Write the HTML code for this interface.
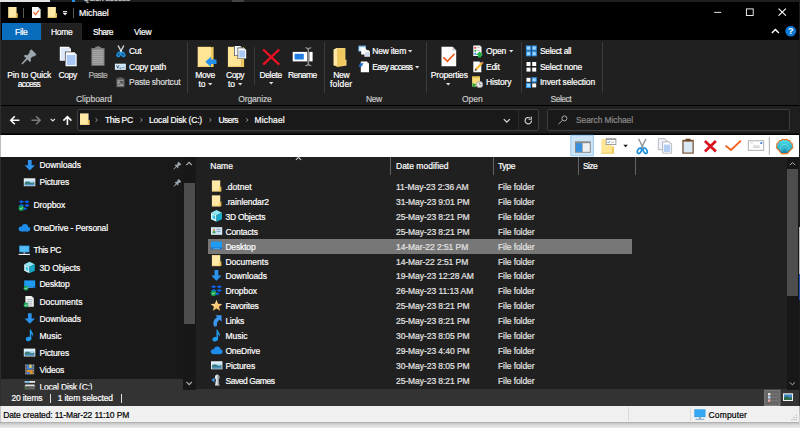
<!DOCTYPE html>
<html>
<head>
<meta charset="utf-8">
<title>Michael</title>
<style>
*{box-sizing:border-box;margin:0;padding:0}
html,body{width:800px;height:428px;overflow:hidden;background:#000}
body{position:relative;font-family:"Liberation Sans",sans-serif;font-size:8.6px;color:#fff;line-height:11px}
.a{position:absolute}
.t{position:absolute;white-space:nowrap;color:#fff;-webkit-text-stroke:0.2px currentColor}
.c{text-align:center}
.g{color:#b4b4b4}
svg{position:absolute;overflow:visible}
/* regions */
#topsliver{left:0;top:0;width:800px;height:2px;background:#1e1e1e}
#title{left:0;top:2px;width:800px;height:38px;background:#000}
#ribbon{left:0;top:40px;width:800px;height:64.7px;background:#202020}
#addr{left:0;top:106px;width:800px;height:28px;background:#1f1f1f;border-bottom:1px solid #0e0e0e}
#tool{left:0;top:135px;width:798.5px;height:21.6px;background:#fff}
#nav{left:0;top:157px;width:196px;height:233px;background:#191919}
#list{left:196px;top:157px;width:604px;height:233px;background:#202020}
#status{left:0;top:389.4px;width:800px;height:16.6px;background:#333}
#bottom{left:0;top:406px;width:798.5px;height:15.6px;background:#f0f0f0}
#under{left:0;top:421.6px;width:800px;height:6.4px;background:linear-gradient(#a8a8a8,#c8c8c8 25%,#dcdcdc 55%,#e9e9e9)}
.sep{position:absolute;width:1px;background:#3d3d3d}
.row{position:absolute;left:0;height:15px;width:100%}
</style>
</head>
<body>
<div class="a" id="topsliver"></div>
<div class="a" style="left:0;top:0;width:49.5px;height:1.7px;background:#e2e2e2"></div>
<div class="a" style="left:72px;top:0;width:3px;height:1.7px;background:#2a8fe8"></div>
<div class="a" style="left:232px;top:0;width:12px;height:1.7px;background:#444"></div>
<div class="a" id="title"></div>
<div class="a" id="ribbon"></div>
<div class="a" id="addr"></div>
<div class="a" id="tool"></div>
<div class="a" id="nav"></div>
<div class="a" id="list"></div>
<div class="a" id="status"></div>
<div class="a" id="bottom"></div>
<div class="a" id="under"></div>
<div class="a" style="left:1.5px;top:23px;width:39.5px;height:17px;background:#0a6cbd;"></div>
<div class="a" style="left:41px;top:23px;width:41px;height:17px;background:#202020;border:1px solid #262626;border-bottom:none"></div>
<span class="t" style="left:79.0px;top:8px;font-size:8.7px;letter-spacing:-0.040px;color:#fff;">Michael</span>
<span class="t" style="left:15.0px;top:27px;font-size:8.5px;letter-spacing:-0.299px;color:#fff;">File</span>
<span class="t" style="left:51.0px;top:27px;font-size:8.5px;letter-spacing:-0.294px;color:#fff;">Home</span>
<span class="t" style="left:93.0px;top:27px;font-size:8.5px;letter-spacing:-0.537px;color:#fff;">Share</span>
<span class="t" style="left:134.0px;top:27px;font-size:8.5px;letter-spacing:-0.193px;color:#fff;">View</span>
<div class="a" style="left:23.2px;top:8px;width:1px;height:9.5px;background:#5a5a5a;"></div>
<div class="a" style="left:73.2px;top:8px;width:1px;height:9.5px;background:#5a5a5a;"></div>
<span class="t" style="left:83.0px;top:-7px;font-size:8.5px;letter-spacing:-0.295px;color:#cfcfcf;">Quick access</span>
<svg style="left:0;top:0" width="800" height="428" viewBox="0 0 800 428"><rect x="8.20" y="7.00" width="8.36" height="10.70" fill="#ffe9a6" /><path d="M15.80 13.42L17.70 12.88V17.70H15.80Z" fill="#e8bf52" /><rect x="8.20" y="16.80" width="8.36" height="0.90" fill="#f3d06e" /><path d="M32.00 7.00H38.20L40.60 9.40V18.00H32.00Z" fill="#fff" /><path d="M38.20 7.00V9.40H40.60Z" fill="#c9c9c9" /><path d="M33.8 12.6L35.6 14.6L38.6 10.8" fill="none" stroke="#f0581c" stroke-width="1.1" stroke-linecap="square"/><rect x="47.70" y="7.00" width="8.18" height="10.70" fill="#ffe9a6" /><path d="M55.14 13.42L57.00 12.88V17.70H55.14Z" fill="#e8bf52" /><rect x="47.70" y="16.80" width="8.18" height="0.90" fill="#f3d06e" /><rect x="63.00" y="11.00" width="4.00" height="0.90" fill="#fff" /><path d="M62.5 12.8H67.5L65 15.2Z" fill="#fff" /><rect x="714.20" y="11.90" width="7.00" height="0.90" fill="#fff" /><rect x="746.40" y="8.90" width="6.80" height="6.60" fill="none" stroke="#fff" stroke-width="0.9"/><path d="M778.6 8.6L785.9 15.7M785.9 8.6L778.6 15.7" fill="none" stroke="#fff" stroke-width="1.15" /><path d="M771.90 33.05L775.40 29.55L778.90 33.05" fill="none" stroke="#fff" stroke-width="1.5" /><circle cx="790.7" cy="31.2" r="5.4" fill="#0f78d4" /><text x="790.7" y="34.4" font-family="Liberation Sans,sans-serif" font-weight="bold" font-size="9" fill="#fff" text-anchor="middle">?</text></svg>
<span class="t" style="left:7.2px;top:70px;font-size:8.5px;letter-spacing:-0.152px;color:#fff;">Pin to Quick</span>
<span class="t" style="left:17.8px;top:79px;font-size:8.5px;letter-spacing:-0.676px;color:#fff;">access</span>
<span class="t" style="left:58.5px;top:70px;font-size:8.5px;letter-spacing:-0.386px;color:#fff;">Copy</span>
<span class="t" style="left:88.5px;top:70px;font-size:8.5px;letter-spacing:-0.647px;color:#b4b4b4;">Paste</span>
<span class="t" style="left:76.0px;top:94px;font-size:8.5px;letter-spacing:-0.043px;color:#c8c8c8;">Clipboard</span>
<span class="t" style="left:129.0px;top:46px;font-size:8.5px;letter-spacing:-0.342px;color:#fff;">Cut</span>
<span class="t" style="left:129.0px;top:62px;font-size:8.5px;letter-spacing:-0.194px;color:#fff;">Copy path</span>
<span class="t" style="left:129.0px;top:77px;font-size:8.5px;letter-spacing:-0.217px;color:#dcdcdc;">Paste shortcut</span>
<span class="t" style="left:195.3px;top:70px;font-size:8.5px;letter-spacing:-0.296px;color:#fff;">Move</span>
<span class="t" style="left:198.5px;top:79px;font-size:8.5px;letter-spacing:-0.044px;color:#fff;">to</span>
<span class="t" style="left:226.0px;top:70px;font-size:8.5px;letter-spacing:-0.436px;color:#fff;">Copy</span>
<span class="t" style="left:228.0px;top:79px;font-size:8.5px;letter-spacing:-0.044px;color:#fff;">to</span>
<span class="t" style="left:259.4px;top:70px;font-size:8.5px;letter-spacing:-0.328px;color:#fff;">Delete</span>
<span class="t" style="left:288.0px;top:70px;font-size:8.5px;letter-spacing:-0.588px;color:#fff;">Rename</span>
<span class="t" style="left:238.3px;top:94px;font-size:8.5px;letter-spacing:-0.149px;color:#c8c8c8;">Organize</span>
<span class="t" style="left:333.3px;top:70px;font-size:8.5px;letter-spacing:-0.368px;color:#fff;">New</span>
<span class="t" style="left:330.0px;top:79px;font-size:8.5px;letter-spacing:0.173px;color:#fff;">folder</span>
<span class="t" style="left:372.3px;top:46px;font-size:8.5px;letter-spacing:-0.216px;color:#fff;">New item</span>
<span class="t" style="left:372.3px;top:62px;font-size:8.5px;letter-spacing:-0.701px;color:#fff;">Easy access</span>
<span class="t" style="left:365.9px;top:94px;font-size:8.5px;letter-spacing:-0.368px;color:#c8c8c8;">New</span>
<span class="t" style="left:430.8px;top:70px;font-size:8.5px;letter-spacing:-0.184px;color:#fff;">Properties</span>
<span class="t" style="left:486.0px;top:46px;font-size:8.5px;letter-spacing:-0.223px;color:#fff;">Open</span>
<span class="t" style="left:486.0px;top:62px;font-size:8.5px;letter-spacing:-0.287px;color:#fff;">Edit</span>
<span class="t" style="left:486.0px;top:77px;font-size:8.5px;letter-spacing:-0.150px;color:#fff;">History</span>
<span class="t" style="left:462.0px;top:94px;font-size:8.5px;letter-spacing:0.002px;color:#c8c8c8;">Open</span>
<span class="t" style="left:539.9px;top:46px;font-size:8.5px;letter-spacing:-0.319px;color:#fff;">Select all</span>
<span class="t" style="left:539.9px;top:62px;font-size:8.5px;letter-spacing:-0.263px;color:#fff;">Select none</span>
<span class="t" style="left:539.9px;top:77px;font-size:8.5px;letter-spacing:-0.129px;color:#fff;">Invert selection</span>
<span class="t" style="left:550.5px;top:94px;font-size:8.5px;letter-spacing:-0.487px;color:#c8c8c8;">Select</span>
<div class="a" style="left:187px;top:42px;width:1px;height:51px;background:#3a3a3a;"></div>
<div class="a" style="left:323.5px;top:42px;width:1px;height:51px;background:#3a3a3a;"></div>
<div class="a" style="left:426px;top:42px;width:1px;height:51px;background:#3a3a3a;"></div>
<div class="a" style="left:520.5px;top:42px;width:1px;height:51px;background:#3a3a3a;"></div>
<div class="a" style="left:602px;top:42px;width:1px;height:51px;background:#3a3a3a;"></div>
<div class="a" style="left:253.5px;top:47px;width:1px;height:38px;background:#3a3a3a;"></div>
<svg style="left:208.3px;top:83.1px" width="4.4" height="2.4" viewBox="0 0 4.4 2.4"><path d="M0 0H4.4L2.2 2.4Z" fill="#e0e0e0"/></svg>
<svg style="left:238.3px;top:83.1px" width="4.4" height="2.4" viewBox="0 0 4.4 2.4"><path d="M0 0H4.4L2.2 2.4Z" fill="#e0e0e0"/></svg>
<svg style="left:268.7px;top:82.39999999999999px" width="4.4" height="2.4" viewBox="0 0 4.4 2.4"><path d="M0 0H4.4L2.2 2.4Z" fill="#e0e0e0"/></svg>
<svg style="left:408.2px;top:50.3px" width="4.4" height="2.4" viewBox="0 0 4.4 2.4"><path d="M0 0H4.4L2.2 2.4Z" fill="#e0e0e0"/></svg>
<svg style="left:415.40000000000003px;top:66.3px" width="4.4" height="2.4" viewBox="0 0 4.4 2.4"><path d="M0 0H4.4L2.2 2.4Z" fill="#e0e0e0"/></svg>
<svg style="left:446.40000000000003px;top:82.8px" width="4.4" height="2.4" viewBox="0 0 4.4 2.4"><path d="M0 0H4.4L2.2 2.4Z" fill="#e0e0e0"/></svg>
<svg style="left:509.2px;top:50.3px" width="4.4" height="2.4" viewBox="0 0 4.4 2.4"><path d="M0 0H4.4L2.2 2.4Z" fill="#e0e0e0"/></svg>
<svg style="left:0;top:0" width="800" height="428" viewBox="0 0 800 428"><path d="M22.39 64.39L27.49 59.59L30.10 62.20L31.16 59.73L30.39 58.53L33.28 56.19L34.34 56.55L36.47 54.42L31.38 49.33L29.25 51.46L29.61 52.52L27.27 55.41L26.07 54.64L23.60 55.70L26.21 58.31L21.41 63.41Z" fill="#9ca6ae" /><path d="M59.80 46.80H68.75L70.95 49.00V60.84H59.80Z" fill="#fff" /><path d="M68.75 46.80V49.00H70.95Z" fill="#c9c9c9" /><rect x="60.80" y="49.20" width="8.95" height="10.64" fill="#dde9fb" /><rect x="60.80" y="47.80" width="7.75" height="2.00" fill="#dde9fb" /><rect x="64.95" y="51.66" width="11.75" height="14.64" fill="#1f1f1f" /><path d="M65.55 52.26H74.50L76.70 54.46V66.30H65.55Z" fill="#fff" /><path d="M74.50 52.26V54.46H76.70Z" fill="#c9c9c9" /><rect x="66.75" y="54.86" width="8.75" height="10.24" fill="#a9c8f5" /><rect x="91.30" y="48.00" width="13.30" height="17.80" fill="#787878" /><rect x="92.40" y="49.60" width="11.10" height="15.20" fill="#a6a6a6" /><rect x="92.40" y="51.20" width="11.10" height="0.60" fill="#858585" /><rect x="92.40" y="53.20" width="11.10" height="0.60" fill="#858585" /><rect x="92.40" y="55.20" width="11.10" height="0.60" fill="#858585" /><rect x="92.40" y="57.20" width="11.10" height="0.60" fill="#858585" /><rect x="92.40" y="59.20" width="11.10" height="0.60" fill="#858585" /><rect x="92.40" y="61.20" width="11.10" height="0.60" fill="#858585" /><rect x="92.40" y="63.20" width="11.10" height="0.60" fill="#858585" /><rect x="95.20" y="46.80" width="5.60" height="2.40" fill="#808080" /><rect x="97.20" y="46.00" width="1.60" height="1.20" fill="#808080" /><path d="M118.06 45.50L121.80 52.62" fill="none" stroke="#d4d8dc" stroke-width="1.4" /><path d="M123.84 45.50L120.10 52.62" fill="none" stroke="#d4d8dc" stroke-width="1.4" /><ellipse cx="118.74" cy="54.43" rx="1.36" ry="2.15" fill="none" stroke="#1c8fdc" stroke-width="1.7" transform="rotate(28 118.74 54.43)"/><ellipse cx="123.16" cy="54.43" rx="1.36" ry="2.15" fill="none" stroke="#1c8fdc" stroke-width="1.7" transform="rotate(-28 123.16 54.43)"/><rect x="114.90" y="63.70" width="10.90" height="6.10" fill="#eaf5ff" /><rect x="115.60" y="64.40" width="9.50" height="4.70" fill="#c5e3fb" /><path d="M116.6 65.3L117.8 68.2L119 65.3M119.6 68.2H121.2" fill="none" stroke="#333" stroke-width="0.7" /><rect x="121.60" y="67.40" width="3.00" height="0.60" fill="#5a7a96" /><rect x="116.30" y="78.20" width="8.30" height="9.00" fill="#5a5a5a" /><rect x="117.50" y="79.80" width="5.90" height="6.40" fill="#9c9c9c" /><rect x="118.60" y="77.20" width="3.80" height="1.80" fill="#5a5a5a" /><path d="M118.6 85L121.8 81.8M119.6 81.4H122.2V84" fill="none" stroke="#333" stroke-width="0.9" /><rect x="197.70" y="46.80" width="13.60" height="20.20" fill="#ffe596" /><path d="M211 47.6L213.6 46.8V67H211Z" fill="#f0c95c" /><rect x="197.70" y="65.80" width="13.60" height="1.20" fill="#f1cf6d" /><path d="M205.3 61.8L211 56.7V59.6H216.5V64H211V67Z" fill="#2390ec" /><rect x="227.90" y="46.80" width="13.80" height="20.20" fill="#ffe596" /><path d="M241.4 47.6L244.1 46.8V67H241.4Z" fill="#f0c95c" /><rect x="227.90" y="65.80" width="13.80" height="1.20" fill="#f1cf6d" /><rect x="234.00" y="45.30" width="8.60" height="10.60" fill="#1f1f1f" /><path d="M234.60 45.90H240.40L242.20 47.70V55.50H234.60Z" fill="#f4f8ff" /><path d="M240.40 45.90V47.70H242.20Z" fill="#c9c9c9" /><rect x="237.60" y="47.60" width="9.20" height="11.30" fill="#1f1f1f" /><path d="M238.20 48.20H244.40L246.20 50.00V58.40H238.20Z" fill="#fff" /><path d="M244.40 48.20V50.00H246.20Z" fill="#c9c9c9" /><rect x="239.20" y="50.40" width="6.00" height="7.00" fill="#a9c8f5" /><path d="M263.2 49.5L279.2 64.6M279.2 49.5L263.2 64.6" fill="none" stroke="#e81123" stroke-width="2.4" /><rect x="292.70" y="51.90" width="19.90" height="9.50" fill="#fff" /><rect x="294.60" y="53.80" width="9.20" height="5.70" fill="#1e7fe0" /><rect x="307.20" y="51.90" width="2.20" height="9.50" fill="#3a3a3a" /><path d="M305.4 47.8C307 47.8 308.3 48.6 308.3 50V63.4C308.3 64.8 307 65.6 305.4 65.6M311.2 47.8C309.6 47.8 308.3 48.6 308.3 50M308.3 63.4C308.3 64.8 309.6 65.6 311.2 65.6" fill="none" stroke="#a0a0a0" stroke-width="1.1" /><path d="M333.7 49.5L337 47.9H345.4V60L346.5 59.4V65.4L337.6 67L333.7 65.2Z" fill="#f3d274" /><path d="M333.7 49.5L337 47.9V65.6L333.7 65.2Z" fill="#ffe9a8" /><path d="M337 49.6H344.6V64.6L337.6 66.2Z" fill="#eec85e" /><rect x="358.40" y="45.60" width="7.60" height="6.00" fill="#6aaee8" /><rect x="359.20" y="46.80" width="6.00" height="4.00" fill="#e6f2fc" /><path d="M361.20 48.00H365.00L366.40 49.40V54.40H361.20Z" fill="#fff" /><path d="M365.00 48.00V49.40H366.40Z" fill="#c9c9c9" /><path d="M364.40 50.00H368.50L369.90 51.40V56.70H364.40Z" fill="#f1f1f1" /><path d="M368.50 50.00V51.40H369.90Z" fill="#c9c9c9" /><rect x="365.20" y="52.60" width="3.80" height="3.20" fill="#c9d8ee" /><path d="M360.80 61.40H366.80L369.00 63.60V72.20H360.80Z" fill="#fff" /><path d="M366.80 61.40V63.60H369.00Z" fill="#c9c9c9" /><path d="M358.2 66.8L360.4 63.2H363.6L361.4 66.8Z" fill="#1e6fd0" /><path d="M441.50 46.80H452.60L456.20 50.40V66.20H441.50Z" fill="#fff" /><path d="M452.60 46.80V50.40H456.20Z" fill="#c9c9c9" /><path d="M443.9 57.9L447.4 61.3L454 54.4" fill="none" stroke="#f0581c" stroke-width="1.7" stroke-linecap="square"/><path d="M473.30 45.50H479.90L481.50 47.10V56.10H473.30Z" fill="#fff" /><path d="M479.90 45.50V47.10H481.50Z" fill="#c9c9c9" /><rect x="474.40" y="46.90" width="1.80" height="1.80" fill="#e23b2e" /><rect x="474.40" y="49.90" width="1.80" height="1.80" fill="#2fa84f" /><rect x="474.40" y="52.90" width="1.80" height="1.80" fill="#2a7de1" /><rect x="477.00" y="47.40" width="2.60" height="0.60" fill="#999" /><rect x="477.00" y="50.40" width="2.60" height="0.60" fill="#999" /><path d="M479.6 51.4L483.2 55H481.2V57.4H478V55H476Z" fill="#1fb141" /><path d="M473.30 61.40H479.30L481.30 63.40V72.20H473.30Z" fill="#fff" /><path d="M479.30 61.40V63.40H481.30Z" fill="#c9c9c9" /><path d="M474.6 71.2L475.4 68.4L481.4 62.2L483 63.6L477 70Z" fill="#f2b632" /><path d="M474.6 71.2L475.4 68.4L477 70Z" fill="#444" /><path d="M481.4 62.2L482.2 61.4L483.8 62.8L483 63.6Z" fill="#e06a8a" /><rect x="472.10" y="76.50" width="7.90" height="10.00" fill="#f7de7a" /><rect x="472.10" y="76.50" width="7.90" height="1.60" fill="#e9c24e" /><path d="M472.6 83L476.4 84.6L475 85.4L476 87L474.6 87.6L473.8 86.2L472.4 87Z" fill="#1fa83f" /><circle cx="479.6" cy="84.5" r="3.2" fill="#e9e9e9" stroke="#8a8a8a" stroke-width="0.7"/><path d="M479.6 82.6V84.6H481.2" fill="none" stroke="#555" stroke-width="0.6" /><rect x="525.90" y="45.50" width="5.20" height="5.20" fill="#2e96ec" /><rect x="527.00" y="46.60" width="3.00" height="3.00" fill="#a8d6fb" /><rect x="531.60" y="45.50" width="5.20" height="5.20" fill="#2e96ec" /><rect x="532.70" y="46.60" width="3.00" height="3.00" fill="#a8d6fb" /><rect x="525.90" y="51.10" width="5.20" height="5.20" fill="#2e96ec" /><rect x="527.00" y="52.20" width="3.00" height="3.00" fill="#a8d6fb" /><rect x="531.60" y="51.10" width="5.20" height="5.20" fill="#2e96ec" /><rect x="532.70" y="52.20" width="3.00" height="3.00" fill="#a8d6fb" /><rect x="526.50" y="62.00" width="4.00" height="4.00" fill="#fff" /><rect x="532.20" y="62.00" width="4.00" height="4.00" fill="#fff" /><rect x="526.50" y="67.60" width="4.00" height="4.00" fill="#fff" /><rect x="532.20" y="67.60" width="4.00" height="4.00" fill="#fff" /><rect x="526.50" y="77.80" width="4.00" height="4.00" fill="#fff" /><rect x="531.60" y="77.20" width="5.20" height="5.20" fill="#2e96ec" /><rect x="532.70" y="78.30" width="3.00" height="3.00" fill="#a8d6fb" /><rect x="525.90" y="82.80" width="5.20" height="5.20" fill="#2e96ec" /><rect x="527.00" y="83.90" width="3.00" height="3.00" fill="#a8d6fb" /><rect x="532.20" y="83.40" width="4.00" height="4.00" fill="#fff" /></svg>
<div class="a" style="left:76.5px;top:109px;width:462px;height:22px;background:#191919;border:1px solid #3e3e3e;border-radius:1.5px"></div>
<div class="a" style="left:547px;top:109px;width:243.3px;height:22px;background:#191919;border:1px solid #3e3e3e;border-radius:1.5px"></div>
<div class="a" style="left:517.5px;top:110px;width:1px;height:20px;background:#2a2a2a;"></div>
<span class="t" style="left:105.0px;top:115px;font-size:8.5px;letter-spacing:-0.361px;color:#fff;">This PC</span>
<span class="t" style="left:149.0px;top:115px;font-size:8.5px;letter-spacing:-0.182px;color:#fff;">Local Disk (C:)</span>
<span class="t" style="left:218.4px;top:115px;font-size:8.5px;letter-spacing:-0.519px;color:#fff;">Users</span>
<span class="t" style="left:254.6px;top:115px;font-size:8.5px;letter-spacing:0.130px;color:#fff;">Michael</span>
<span class="t" style="left:576.0px;top:115px;font-size:8.5px;letter-spacing:-0.113px;color:#8a8a8a;">Search Michael</span>
<svg style="left:0;top:0" width="800" height="428" viewBox="0 0 800 428"><path d="M19.4 120.2H11M14.8 116.2L10.8 120.2L14.8 124.2" fill="none" stroke="#fff" stroke-width="1.6" /><path d="M31.5 120.2H39.9M36.1 116.2L40.1 120.2L36.1 124.2" fill="none" stroke="#7a7a7a" stroke-width="1.6" /><path d="M50.70 118.85L52.80 120.95L54.90 118.85" fill="none" stroke="#e6e6e6" stroke-width="1.1" /><path d="M67.4 125V117M63.4 120.6L67.4 116.6L71.4 120.6" fill="none" stroke="#fff" stroke-width="1.6" /><rect x="79.40" y="112.80" width="10.80" height="12.80" fill="#14142a" /><rect x="80.00" y="113.40" width="8.54" height="11.60" fill="#ffe9a6" /><path d="M87.76 120.36L89.70 119.78V125.00H87.76Z" fill="#e8bf52" /><rect x="80.00" y="124.10" width="8.54" height="0.90" fill="#f3d06e" /><path d="M95.51 118.20L97.49 120.00L95.51 121.80" fill="none" stroke="#9a9a9a" stroke-width="0.9" /><path d="M140.31 118.20L142.29 120.00L140.31 121.80" fill="none" stroke="#9a9a9a" stroke-width="0.9" /><path d="M209.31 118.20L211.29 120.00L209.31 121.80" fill="none" stroke="#9a9a9a" stroke-width="0.9" /><path d="M246.11 118.20L248.09 120.00L246.11 121.80" fill="none" stroke="#9a9a9a" stroke-width="0.9" /><path d="M503.80 119.10L506.80 122.10L509.80 119.10" fill="none" stroke="#d8d8d8" stroke-width="1.3" /><path d="M531.5 120.6A3.2 3.2 0 1 1 530 118" fill="none" stroke="#cfcfcf" stroke-width="1.2" /><path d="M531.3 116.4V119.3H528.5" fill="none" stroke="#cfcfcf" stroke-width="1.1" /><circle cx="564.4" cy="118.4" r="2.5" fill="none" stroke="#a8a8a8" stroke-width="1"/><path d="M562.6 120.3L558.4 124.2" fill="none" stroke="#a8a8a8" stroke-width="1" /></svg>
<svg style="left:0;top:0" width="800" height="428" viewBox="0 0 800 428"><rect x="570.80" y="135.30" width="22.50" height="20.50" fill="#cce4f7" stroke="#99c9ef" stroke-width="1"/><rect x="575.00" y="141.30" width="15.80" height="11.50" fill="#8a8a8a" /><rect x="576.00" y="143.20" width="6.20" height="8.60" fill="#3a8fde" /><rect x="582.60" y="143.20" width="7.20" height="8.60" fill="#f0f0f0" /><rect x="601.30" y="139.00" width="10.60" height="14.70" fill="#ffe596" /><path d="M611.8 146.8L614 146.2V153.7H611.8Z" fill="#efc85a" /><rect x="601.30" y="152.60" width="10.60" height="1.10" fill="#f1cf6d" /><rect x="605.80" y="138.30" width="10.50" height="6.70" fill="#8c8c8c" /><rect x="606.60" y="139.80" width="8.90" height="4.40" fill="#fff" /><path d="M607.4 141.8L608.4 142.9L610 141" fill="none" stroke="#2a7de1" stroke-width="0.8" /><rect x="610.80" y="141.80" width="3.40" height="0.60" fill="#999" /><path d="M623.3 144.7H627.9L625.6 147.3Z" fill="#111" /><path d="M638.56 138.70L643.40 148.34" fill="none" stroke="#8d9499" stroke-width="1.4" /><path d="M646.04 138.70L641.20 148.34" fill="none" stroke="#8d9499" stroke-width="1.4" /><ellipse cx="639.44" cy="150.79" rx="1.76" ry="2.91" fill="none" stroke="#1c8fdc" stroke-width="1.7" transform="rotate(28 639.44 150.79)"/><ellipse cx="645.16" cy="150.79" rx="1.76" ry="2.91" fill="none" stroke="#1c8fdc" stroke-width="1.7" transform="rotate(-28 645.16 150.79)"/><path d="M658.30 138.70H665.10L667.10 140.70V149.70H658.30Z" fill="#eef3fb" stroke="#8a8f96" stroke-width="0.6" /><path d="M665.10 138.70V140.70H667.10Z" fill="#c9c9c9" /><path d="M662.60 141.90H669.60L671.60 143.90V153.20H662.60Z" fill="#fff" stroke="#8a8f96" stroke-width="0.6" /><path d="M669.60 141.90V143.90H671.60Z" fill="#c9c9c9" /><rect x="663.80" y="144.60" width="6.60" height="7.40" fill="#b4cdf4" /><rect x="682.30" y="139.80" width="11.50" height="13.90" fill="#7a5636" /><rect x="683.60" y="141.60" width="8.90" height="10.90" fill="#d9e9f5" /><rect x="685.60" y="138.70" width="4.90" height="2.40" fill="#6b4a2c" /><path d="M704.9 141.1L715.9 151.6M715.9 141.1L704.9 151.6" fill="none" stroke="#d9101e" stroke-width="2.7" /><path d="M726.2 146.2L731 150L740.3 141.2" fill="none" stroke="#f0601a" stroke-width="1.8" stroke-linecap="square"/><rect x="748.30" y="140.80" width="15.40" height="9.50" fill="#fff" stroke="#a8a8a8" stroke-width="0.9"/><rect x="760.40" y="142.20" width="1.80" height="1.80" fill="#2a7de1" /><rect x="750.00" y="142.60" width="3.00" height="0.60" fill="#bbb" /><rect x="753.00" y="145.60" width="6.60" height="0.70" fill="#aaa" /><rect x="753.00" y="147.20" width="6.60" height="0.70" fill="#bbb" /><rect x="768.80" y="137.20" width="1.20" height="17.60" fill="#b8b8b8" /><defs><linearGradient id="shg" x1="0" y1="0" x2="0" y2="1"><stop offset="0" stop-color="#52e0ec"/><stop offset="0.55" stop-color="#2fb9cf"/><stop offset="1" stop-color="#137a9c"/></linearGradient></defs><path d="M781.6 153.7L777.37 148.64A1.77 1.77 0 0 1 777.09 145.57A1.81 1.81 0 0 1 778.45 142.72A1.93 1.93 0 0 1 781.15 140.72A2.03 2.03 0 0 1 784.60 140.00A2.03 2.03 0 0 1 788.05 140.72A1.93 1.93 0 0 1 790.75 142.72A1.81 1.81 0 0 1 792.11 145.57A1.77 1.77 0 0 1 791.83 148.64L787.2 153.7Z" fill="url(#shg)" stroke="#e8772a" stroke-width="1.1" stroke-linejoin="round"/><path d="M780.4 150C780 146.4 782 144.4 784.6 144.4C787.2 144.4 789.2 146.4 788.8 150" fill="none" stroke="#7fe6f0" stroke-width="0.7" /><path d="M782.2 151.4C782 148.8 783 147.4 784.6 147.4C786.2 147.4 787.2 148.8 787 151.4" fill="none" stroke="#5ccfe6" stroke-width="0.7" /><rect x="781.60" y="153.00" width="5.60" height="1.10" fill="#e8772a" /></svg>
<div class="a" style="left:1.4px;top:378.8px;width:181.6px;height:11.2px;background:#333;"></div>
<span class="t" style="left:39.4px;top:160px;font-size:8.5px;letter-spacing:-0.050px;color:#fff;">Downloads</span>
<span class="t" style="left:39.4px;top:177px;font-size:8.5px;letter-spacing:-0.138px;color:#fff;">Pictures</span>
<span class="t" style="left:33.4px;top:200px;font-size:8.5px;letter-spacing:-0.047px;color:#fff;">Dropbox</span>
<span class="t" style="left:33.4px;top:223px;font-size:8.5px;letter-spacing:-0.127px;color:#fff;">OneDrive - Personal</span>
<span class="t" style="left:33.4px;top:245px;font-size:8.5px;letter-spacing:-0.375px;color:#fff;">This PC</span>
<span class="t" style="left:39.4px;top:263px;font-size:8.5px;letter-spacing:-0.144px;color:#fff;">3D Objects</span>
<span class="t" style="left:39.4px;top:279px;font-size:8.5px;letter-spacing:-0.155px;color:#fff;">Desktop</span>
<span class="t" style="left:39.4px;top:297px;font-size:8.5px;letter-spacing:0.012px;color:#fff;">Documents</span>
<span class="t" style="left:39.4px;top:314px;font-size:8.5px;letter-spacing:-0.050px;color:#fff;">Downloads</span>
<span class="t" style="left:39.4px;top:331px;font-size:8.5px;letter-spacing:-0.019px;color:#fff;">Music</span>
<span class="t" style="left:39.4px;top:348px;font-size:8.5px;letter-spacing:-0.138px;color:#fff;">Pictures</span>
<span class="t" style="left:39.4px;top:365px;font-size:8.5px;letter-spacing:-0.206px;color:#fff;">Videos</span>
<span class="t" style="left:39.4px;top:382px;font-size:8.5px;letter-spacing:-0.176px;color:#fff;clip-path:inset(0 0 3.6px 0);">Local Disk (C:)</span>
<div class="a" style="left:183px;top:157px;width:12.5px;height:233px;background:#171717;"></div>
<div class="a" style="left:184px;top:183px;width:10.6px;height:141px;background:#4d4d4d;"></div>
<svg style="left:0;top:0" width="800" height="428" viewBox="0 0 800 428"><path d="M27.93 160.00H31.67V165.30H35.00L29.80 170.60L24.60 165.30H27.93Z" fill="#2b93ee" /><rect x="23.80" y="178.30" width="11.50" height="7.90" fill="#f2f4f6" /><rect x="24.70" y="179.20" width="9.70" height="6.10" fill="#a9d6f5" /><path d="M24.70 185.30V182.25L27.82 181.14L31.85 183.04L34.40 182.09V185.30Z" fill="#3d7d78" /><rect x="24.70" y="183.99" width="9.70" height="1.31" fill="#4a90c8" /><rect x="24.70" y="179.20" width="9.70" height="1.50" fill="#e6f4fd" /><path d="M18.69 201.79L21.45 200.36L24.21 201.79L21.45 203.22Z" fill="#0d62f2" /><path d="M24.21 201.79L26.96 200.36L29.72 201.79L26.96 203.22Z" fill="#0d62f2" /><path d="M18.69 205.50L21.45 204.07L24.21 205.50L21.45 206.93Z" fill="#0d62f2" /><path d="M24.21 205.50L26.96 204.07L29.72 205.50L26.96 206.93Z" fill="#0d62f2" /><path d="M21.87 208.68L24.63 207.25L27.39 208.68L24.63 210.11Z" fill="#0d62f2" /><circle cx="21.24" cy="208.15" r="2.76" fill="#0e9c4c" /><path d="M19.97 208.26L20.92 209.10L22.51 207.30" fill="none" stroke="#e8fff0" stroke-width="0.8" /><ellipse cx="22.08" cy="228.88" rx="3.48" ry="2.52" fill="#1f8ceb"/><ellipse cx="24.98" cy="227.11" rx="3.13" ry="3.11" fill="#1f8ceb"/><ellipse cx="27.42" cy="229.03" rx="2.78" ry="2.37" fill="#1f8ceb"/><rect x="22.08" y="228.44" width="5.34" height="2.96" fill="#1f8ceb" /><rect x="19.20" y="245.60" width="10.20" height="6.72" fill="#2a9bf0" /><rect x="19.90" y="246.30" width="8.80" height="5.32" fill="#55bdf8" /><rect x="23.39" y="252.32" width="1.82" height="1.34" fill="#b8c4cc" /><rect x="18.60" y="253.86" width="11.40" height="1.15" fill="#e8eef2" /><path d="M29.50 261.80L34.80 264.31L29.50 266.82L24.20 264.31Z" fill="#8fe9f5" /><path d="M24.20 264.31L29.50 266.82V273.20L24.20 270.69Z" fill="#d4f8fd" /><path d="M34.80 264.31L29.50 266.82V273.20L34.80 270.69Z" fill="#17a9ca" /><path d="M25.68 266.36L28.23 267.50V270.92L25.68 269.78Z" fill="#35c4e2" /><rect x="24.20" y="280.40" width="11.00" height="7.60" fill="#1e9bf2" /><rect x="24.20" y="286.33" width="11.00" height="1.67" fill="#1270c4" /><rect x="26.40" y="286.78" width="6.60" height="0.61" fill="#7cc4fa" /><circle cx="26" cy="288.2" r="2.4" fill="#18a558" /><path d="M24.70 288.20L25.70 289.20L27.40 287.30" fill="none" stroke="#fff" stroke-width="0.7" /><path d="M25.40 296.00H31.60L33.80 298.20V306.80H25.40Z" fill="#f4f4f4" /><path d="M31.60 296.00V298.20H33.80Z" fill="#c9c9c9" /><rect x="26.80" y="299.00" width="5.60" height="0.70" fill="#8a9aa8" /><rect x="26.80" y="300.90" width="5.60" height="0.70" fill="#8a9aa8" /><rect x="26.80" y="302.80" width="5.60" height="0.70" fill="#8a9aa8" /><rect x="26.80" y="304.70" width="5.60" height="0.70" fill="#8a9aa8" /><circle cx="26" cy="305" r="2.4" fill="#18a558" /><path d="M24.70 305.00L25.70 306.00L27.40 304.10" fill="none" stroke="#fff" stroke-width="0.7" /><path d="M27.93 313.20H31.67V318.50H35.00L29.80 323.80L24.60 318.50H27.93Z" fill="#2b93ee" /><ellipse cx="28.58" cy="338.95" rx="2.74" ry="2.17" fill="#1f9cf0" transform="rotate(-15 28.58 338.95)"/><rect x="29.80" y="329.60" width="1.52" height="9.58" fill="#1f9cf0" /><path d="M30.56 329.60C31.32 332.45 34.36 333.25 32.84 336.90C32.99 334.62 31.32 333.93 30.56 333.48Z" fill="#1f9cf0" /><rect x="23.80" y="348.60" width="11.50" height="7.90" fill="#f2f4f6" /><rect x="24.70" y="349.50" width="9.70" height="6.10" fill="#a9d6f5" /><path d="M24.70 355.60V352.55L27.82 351.44L31.85 353.34L34.40 352.39V355.60Z" fill="#3d7d78" /><rect x="24.70" y="354.29" width="9.70" height="1.31" fill="#4a90c8" /><rect x="24.70" y="349.50" width="9.70" height="1.50" fill="#e6f4fd" /><rect x="25.00" y="364.00" width="9.40" height="10.80" fill="#4a4a4a" /><rect x="26.70" y="364.70" width="6.00" height="4.97" fill="#3f7fd8" /><rect x="26.70" y="369.83" width="6.00" height="4.32" fill="#d9922e" /><rect x="29.23" y="364.70" width="2.35" height="3.24" fill="#e8c94a" /><rect x="26.70" y="372.10" width="3.29" height="2.05" fill="#3f7fd8" /><rect x="25.35" y="364.90" width="0.90" height="1.20" fill="#c8c8c8" /><rect x="33.15" y="364.90" width="0.90" height="1.20" fill="#c8c8c8" /><rect x="25.35" y="367.47" width="0.90" height="1.20" fill="#c8c8c8" /><rect x="33.15" y="367.47" width="0.90" height="1.20" fill="#c8c8c8" /><rect x="25.35" y="370.04" width="0.90" height="1.20" fill="#c8c8c8" /><rect x="33.15" y="370.04" width="0.90" height="1.20" fill="#c8c8c8" /><rect x="25.35" y="372.61" width="0.90" height="1.20" fill="#c8c8c8" /><rect x="33.15" y="372.61" width="0.90" height="1.20" fill="#c8c8c8" /><rect x="24.70" y="381.00" width="10.40" height="1.70" fill="#f0f0f0" /><rect x="25.30" y="381.35" width="4.40" height="1.00" fill="#1e9bf2" /><path d="M25.60 384.60H34.20L35.40 386.60H24.40Z" fill="#e4e4e4" /><rect x="24.40" y="386.60" width="11.00" height="3.40" fill="#4c4c4c" /><rect x="25.60" y="387.60" width="1.60" height="1.00" fill="#35c24a" /><rect x="28.80" y="387.70" width="5.50" height="0.80" fill="#8a8a8a" /><path d="M173.96 169.56L176.60 167.06L177.97 168.42L178.52 167.13L178.11 166.51L179.62 165.29L180.17 165.48L181.27 164.37L178.63 161.73L177.52 162.83L177.71 163.38L176.49 164.89L175.87 164.48L174.58 165.03L175.94 166.40L173.44 169.04Z" fill="#9aa5ad" /><path d="M173.96 186.76L176.60 184.26L177.97 185.62L178.52 184.33L178.11 183.71L179.62 182.49L180.17 182.68L181.27 181.57L178.63 178.93L177.52 180.03L177.71 180.58L176.49 182.09L175.87 181.68L174.58 182.23L175.94 183.60L173.44 186.24Z" fill="#9aa5ad" /><path d="M186.40 165.15L189.10 162.45L191.80 165.15" fill="none" stroke="#b0b0b0" stroke-width="1.2" /><path d="M186.50 381.95L189.20 384.65L191.90 381.95" fill="none" stroke="#b0b0b0" stroke-width="1.2" /></svg>
<div class="a" style="left:208px;top:239px;width:423.5px;height:14.5px;background:#777;"></div>
<div class="a" style="left:786.5px;top:158px;width:12px;height:232px;background:#171717;"></div>
<div class="a" style="left:787.4px;top:169px;width:10.6px;height:127px;background:#4d4d4d;"></div>
<span class="t" style="left:210.3px;top:161px;font-size:8.5px;letter-spacing:-0.019px;color:#fff;">Name</span>
<span class="t" style="left:396.0px;top:161px;font-size:8.5px;letter-spacing:0.004px;color:#fff;">Date modified</span>
<span class="t" style="left:498.0px;top:161px;font-size:8.5px;letter-spacing:-0.357px;color:#fff;">Type</span>
<span class="t" style="left:583.0px;top:161px;font-size:8.5px;letter-spacing:-0.634px;color:#fff;">Size</span>
<div class="a" style="left:390px;top:157px;width:1px;height:17.5px;background:#636363;"></div>
<div class="a" style="left:493px;top:157px;width:1px;height:17.5px;background:#636363;"></div>
<div class="a" style="left:578px;top:157px;width:1px;height:17.5px;background:#636363;"></div>
<div class="a" style="left:635px;top:157px;width:1px;height:17.5px;background:#636363;"></div>
<span class="t" style="left:225.4px;top:182px;font-size:8.5px;letter-spacing:0.044px;color:#fff;">.dotnet</span>
<span class="t" style="left:396.0px;top:182px;font-size:8.5px;letter-spacing:-0.061px;color:#e4e4e4;">11-May-23 2:36 AM</span>
<span class="t" style="left:498.0px;top:182px;font-size:8.5px;letter-spacing:-0.075px;color:#e4e4e4;">File folder</span>
<span class="t" style="left:225.4px;top:197px;font-size:8.5px;letter-spacing:-0.108px;color:#fff;">.rainlendar2</span>
<span class="t" style="left:396.0px;top:197px;font-size:8.5px;letter-spacing:-0.062px;color:#e4e4e4;">31-May-23 9:01 PM</span>
<span class="t" style="left:498.0px;top:197px;font-size:8.5px;letter-spacing:-0.075px;color:#e4e4e4;">File folder</span>
<span class="t" style="left:225.4px;top:212px;font-size:8.5px;letter-spacing:-0.224px;color:#fff;">3D Objects</span>
<span class="t" style="left:396.0px;top:212px;font-size:8.5px;letter-spacing:-0.062px;color:#e4e4e4;">25-May-23 8:21 PM</span>
<span class="t" style="left:498.0px;top:212px;font-size:8.5px;letter-spacing:-0.075px;color:#e4e4e4;">File folder</span>
<span class="t" style="left:225.4px;top:227px;font-size:8.5px;letter-spacing:-0.118px;color:#fff;">Contacts</span>
<span class="t" style="left:396.0px;top:227px;font-size:8.5px;letter-spacing:-0.062px;color:#e4e4e4;">25-May-23 8:21 PM</span>
<span class="t" style="left:498.0px;top:227px;font-size:8.5px;letter-spacing:-0.075px;color:#e4e4e4;">File folder</span>
<span class="t" style="left:225.4px;top:242px;font-size:8.5px;letter-spacing:-0.155px;color:#fff;">Desktop</span>
<span class="t" style="left:396.0px;top:242px;font-size:8.5px;letter-spacing:-0.061px;color:#e4e4e4;">14-Mar-22 2:51 PM</span>
<span class="t" style="left:498.0px;top:242px;font-size:8.5px;letter-spacing:-0.075px;color:#e4e4e4;">File folder</span>
<span class="t" style="left:225.4px;top:257px;font-size:8.5px;letter-spacing:0.012px;color:#fff;">Documents</span>
<span class="t" style="left:396.0px;top:257px;font-size:8.5px;letter-spacing:-0.061px;color:#e4e4e4;">14-Mar-22 2:51 PM</span>
<span class="t" style="left:498.0px;top:257px;font-size:8.5px;letter-spacing:-0.075px;color:#e4e4e4;">File folder</span>
<span class="t" style="left:225.4px;top:271px;font-size:8.5px;letter-spacing:-0.050px;color:#fff;">Downloads</span>
<span class="t" style="left:396.0px;top:271px;font-size:8.5px;letter-spacing:-0.062px;color:#e4e4e4;">19-May-23 12:28 AM</span>
<span class="t" style="left:498.0px;top:271px;font-size:8.5px;letter-spacing:-0.075px;color:#e4e4e4;">File folder</span>
<span class="t" style="left:225.4px;top:286px;font-size:8.5px;letter-spacing:-0.076px;color:#fff;">Dropbox</span>
<span class="t" style="left:396.0px;top:286px;font-size:8.5px;letter-spacing:-0.061px;color:#e4e4e4;">26-May-23 11:13 AM</span>
<span class="t" style="left:498.0px;top:286px;font-size:8.5px;letter-spacing:-0.075px;color:#e4e4e4;">File folder</span>
<span class="t" style="left:225.4px;top:301px;font-size:8.5px;letter-spacing:-0.206px;color:#fff;">Favorites</span>
<span class="t" style="left:396.0px;top:301px;font-size:8.5px;letter-spacing:-0.062px;color:#e4e4e4;">25-May-23 8:21 PM</span>
<span class="t" style="left:498.0px;top:301px;font-size:8.5px;letter-spacing:-0.075px;color:#e4e4e4;">File folder</span>
<span class="t" style="left:225.4px;top:316px;font-size:8.5px;letter-spacing:-0.249px;color:#fff;">Links</span>
<span class="t" style="left:396.0px;top:316px;font-size:8.5px;letter-spacing:-0.062px;color:#e4e4e4;">25-May-23 8:21 PM</span>
<span class="t" style="left:498.0px;top:316px;font-size:8.5px;letter-spacing:-0.075px;color:#e4e4e4;">File folder</span>
<span class="t" style="left:225.4px;top:331px;font-size:8.5px;letter-spacing:-0.019px;color:#fff;">Music</span>
<span class="t" style="left:396.0px;top:331px;font-size:8.5px;letter-spacing:-0.062px;color:#e4e4e4;">30-May-23 8:05 PM</span>
<span class="t" style="left:498.0px;top:331px;font-size:8.5px;letter-spacing:-0.075px;color:#e4e4e4;">File folder</span>
<span class="t" style="left:225.4px;top:346px;font-size:8.5px;letter-spacing:-0.163px;color:#fff;">OneDrive</span>
<span class="t" style="left:396.0px;top:346px;font-size:8.5px;letter-spacing:-0.062px;color:#e4e4e4;">29-May-23 4:40 PM</span>
<span class="t" style="left:498.0px;top:346px;font-size:8.5px;letter-spacing:-0.075px;color:#e4e4e4;">File folder</span>
<span class="t" style="left:225.4px;top:361px;font-size:8.5px;letter-spacing:-0.138px;color:#fff;">Pictures</span>
<span class="t" style="left:396.0px;top:361px;font-size:8.5px;letter-spacing:-0.062px;color:#e4e4e4;">30-May-23 8:05 PM</span>
<span class="t" style="left:498.0px;top:361px;font-size:8.5px;letter-spacing:-0.075px;color:#e4e4e4;">File folder</span>
<span class="t" style="left:225.4px;top:376px;font-size:8.5px;letter-spacing:-0.433px;color:#fff;">Saved Games</span>
<span class="t" style="left:396.0px;top:376px;font-size:8.5px;letter-spacing:-0.062px;color:#e4e4e4;">25-May-23 8:21 PM</span>
<span class="t" style="left:498.0px;top:376px;font-size:8.5px;letter-spacing:-0.075px;color:#e4e4e4;">File folder</span>
<svg style="left:0;top:0" width="800" height="428" viewBox="0 0 800 428"><rect x="211.90" y="180.40" width="8.36" height="11.00" fill="#ffe9a6" /><path d="M219.50 187.00L221.40 186.45V191.40H219.50Z" fill="#e8bf52" /><rect x="211.90" y="190.50" width="8.36" height="0.90" fill="#f3d06e" /><rect x="211.90" y="195.34" width="8.36" height="11.00" fill="#ffe9a6" /><path d="M219.50 201.94L221.40 201.39V206.34H219.50Z" fill="#e8bf52" /><rect x="211.90" y="205.44" width="8.36" height="0.90" fill="#f3d06e" /><path d="M216.50 210.08L222.00 212.63L216.50 215.18L211.00 212.63Z" fill="#8fe9f5" /><path d="M211.00 212.63L216.50 215.18V221.68L211.00 219.13Z" fill="#d4f8fd" /><path d="M222.00 212.63L216.50 215.18V221.68L222.00 219.13Z" fill="#17a9ca" /><path d="M212.54 214.72L215.18 215.88V219.36L212.54 218.20Z" fill="#35c4e2" /><rect x="211.00" y="227.22" width="11.20" height="7.60" fill="#e3f1fb" /><rect x="211.80" y="228.02" width="9.60" height="6.00" fill="#c9e3f7" /><circle cx="214.0" cy="230.02" r="1.1" fill="#e08a3c" /><rect x="212.70" y="231.22" width="2.70" height="2.00" fill="#3a9a4a" /><rect x="216.60" y="229.42" width="4.00" height="0.60" fill="#6a7d8c" /><rect x="216.60" y="231.02" width="4.00" height="0.60" fill="#6a7d8c" /><rect x="211.00" y="241.56" width="11.00" height="7.60" fill="#1e9bf2" /><rect x="211.00" y="247.49" width="11.00" height="1.67" fill="#1270c4" /><rect x="213.20" y="247.94" width="6.60" height="0.61" fill="#7cc4fa" /><rect x="211.90" y="255.10" width="8.36" height="11.00" fill="#ffe9a6" /><path d="M219.50 261.70L221.40 261.15V266.10H219.50Z" fill="#e8bf52" /><rect x="211.90" y="265.20" width="8.36" height="0.90" fill="#f3d06e" /><path d="M214.53 270.04H218.27V275.44H221.60L216.40 280.84L211.20 275.44H214.53Z" fill="#2b93ee" /><path d="M210.89 286.80L213.70 285.34L216.51 286.80L213.70 288.26Z" fill="#0d62f2" /><path d="M216.51 286.80L219.32 285.34L222.12 286.80L219.32 288.26Z" fill="#0d62f2" /><path d="M210.89 290.58L213.70 289.12L216.51 290.58L213.70 292.04Z" fill="#0d62f2" /><path d="M216.51 290.58L219.32 289.12L222.12 290.58L219.32 292.04Z" fill="#0d62f2" /><path d="M214.13 293.82L216.94 292.36L219.75 293.82L216.94 295.28Z" fill="#0d62f2" /><circle cx="213.48" cy="293.28" r="2.81" fill="#0e9c4c" /><path d="M212.19 293.39L213.16 294.25L214.78 292.42" fill="none" stroke="#e8fff0" stroke-width="0.8" /><defs><linearGradient id="stg" x1="0" y1="0" x2="1" y2="1"><stop offset="0" stop-color="#ffe2a6"/><stop offset="1" stop-color="#f5b04a"/></linearGradient></defs><path d="M216.50 299.72L218.09 303.64L222.30 303.93L219.07 306.65L220.09 310.76L216.50 308.52L212.91 310.76L213.93 306.65L210.70 303.93L214.91 303.64Z" fill="url(#stg)" /><g transform="translate(0 0.16)"><path d="M215.4 315.2H221.6V321.6L219.6 319.6C217.4 321 216.6 323 217 325.8L214.4 326.6C212.4 323 213.6 319 217.2 317.2Z" fill="#3a96ee" /></g><ellipse cx="215.25" cy="339.15" rx="2.81" ry="2.17" fill="#1f9cf0" transform="rotate(-15 215.25 339.15)"/><rect x="216.50" y="329.80" width="1.56" height="9.58" fill="#1f9cf0" /><path d="M217.28 329.80C218.06 332.65 221.18 333.45 219.62 337.10C219.78 334.82 218.06 334.13 217.28 333.68Z" fill="#1f9cf0" /><ellipse cx="214.34" cy="351.56" rx="3.54" ry="2.58" fill="#1f8ceb"/><ellipse cx="217.29" cy="349.73" rx="3.19" ry="3.19" fill="#1f8ceb"/><ellipse cx="219.77" cy="351.71" rx="2.83" ry="2.43" fill="#1f8ceb"/><rect x="214.34" y="351.10" width="5.43" height="3.04" fill="#1f8ceb" /><rect x="211.00" y="361.28" width="11.40" height="8.00" fill="#f2f4f6" /><rect x="211.90" y="362.18" width="9.60" height="6.20" fill="#a9d6f5" /><path d="M211.90 368.38V365.28L214.99 364.16L218.98 366.08L221.50 365.12V368.38Z" fill="#3d7d78" /><rect x="211.90" y="367.04" width="9.60" height="1.34" fill="#4a90c8" /><rect x="211.90" y="362.18" width="9.60" height="1.50" fill="#e6f4fd" /><path d="M215.00 385.62L216.00 379.82C214.00 377.82 215.20 374.62 217.20 374.62C219.20 374.62 220.40 377.82 218.40 379.82L219.40 385.62Z" fill="#dfe5ea" /><path d="M211.20 380.02L214.60 377.62V382.42Z" fill="#3a8fde" /><path d="M217.60 374.82C220.20 376.22 220.20 378.62 218.40 379.82L219.40 385.62H217.60Z" fill="#8e979e" /><path d="M295.90 159.90L298.50 157.30L301.10 159.90" fill="none" stroke="#ccc" stroke-width="1.1" /><path d="M789.80 382.30L792.40 384.90L795.00 382.30" fill="none" stroke="#b0b0b0" stroke-width="1" /><path d="M790.00 165.10L792.60 162.50L795.20 165.10" fill="none" stroke="#b0b0b0" stroke-width="1" /></svg>
<span class="t" style="left:11.4px;top:393px;font-size:8.5px;letter-spacing:-0.128px;color:#fff;">20 items</span>
<span class="t" style="left:57.8px;top:393px;font-size:8.5px;letter-spacing:-0.135px;color:#fff;">1 item selected</span>
<div class="a" style="left:50px;top:393.5px;width:1px;height:9px;background:#ddd;"></div>
<div class="a" style="left:120.5px;top:393.5px;width:1px;height:9px;background:#ddd;"></div>
<span class="t" style="left:3.2px;top:410px;font-size:8.5px;letter-spacing:-0.128px;color:#000;">Date created: 11-Mar-22 11:10 PM</span>
<span class="t" style="left:708.5px;top:410px;font-size:8.5px;letter-spacing:0.147px;color:#000;">Computer</span>
<div class="a" style="left:628px;top:407px;width:1px;height:14px;background:#d9d9d9;"></div>
<div class="a" style="left:690px;top:407px;width:1px;height:14px;background:#d9d9d9;"></div>
<svg style="left:0;top:0" width="800" height="428" viewBox="0 0 800 428"><rect x="764.70" y="390.20" width="15.30" height="15.30" fill="#666" stroke="#8c8c8c" stroke-width="0.8"/><rect x="768.00" y="393.00" width="2.40" height="2.40" fill="#e8e8e8" /><rect x="771.60" y="393.60" width="2.60" height="1.20" fill="#7a7a7a" /><rect x="775.20" y="393.60" width="2.60" height="1.20" fill="#7a7a7a" /><rect x="768.00" y="396.20" width="2.40" height="2.40" fill="#bcd7f7" /><rect x="771.60" y="396.80" width="2.60" height="1.20" fill="#7a7a7a" /><rect x="775.20" y="396.80" width="2.60" height="1.20" fill="#7a7a7a" /><rect x="768.00" y="399.40" width="2.40" height="2.40" fill="#f0a6a6" /><rect x="771.60" y="400.00" width="2.60" height="1.20" fill="#7a7a7a" /><rect x="775.20" y="400.00" width="2.60" height="1.20" fill="#7a7a7a" /><rect x="783.00" y="393.30" width="10.00" height="7.70" fill="#f2f2f2" /><rect x="784.00" y="394.40" width="8.00" height="5.50" fill="#3f86c8" /><path d="M784 399.9V397.6L787 396L790 398L792 397V399.9Z" fill="#2f6a4a" /><rect x="694.30" y="409.30" width="11.20" height="7.80" fill="#2f9be8" /><rect x="695.10" y="410.10" width="9.60" height="6.20" fill="#35a8f5" /><rect x="698.90" y="417.10" width="2.00" height="1.50" fill="#8899a6" /><rect x="695.60" y="418.80" width="8.60" height="1.00" fill="#7aa7cc" /><rect x="795.80" y="419.00" width="1.10" height="1.10" fill="#b0b0b0" /><rect x="793.60" y="419.00" width="1.10" height="1.10" fill="#b0b0b0" /><rect x="795.80" y="416.80" width="1.10" height="1.10" fill="#b0b0b0" /><rect x="791.40" y="419.00" width="1.10" height="1.10" fill="#b0b0b0" /><rect x="793.60" y="416.80" width="1.10" height="1.10" fill="#b0b0b0" /><rect x="795.80" y="414.60" width="1.10" height="1.10" fill="#b0b0b0" /></svg>
<div class="a" style="left:0;top:2px;width:1.4px;height:404px;background:#2d2d2d"></div>
<div class="a" style="left:0;top:135px;width:1.4px;height:21.6px;background:#bdbdbd"></div>
<div class="a" style="left:0;top:406px;width:1.4px;height:15.6px;background:#c4c4c4"></div>
<div class="a" style="left:798.5px;top:0;width:1.5px;height:406px;background:#1d1d1d"></div>
<div class="a" style="left:798.5px;top:226.5px;width:1.5px;height:47.5px;background:#bcbcbc"></div>
<div class="a" style="left:798.5px;top:274px;width:1.5px;height:26px;background:#2350b0"></div>
<div class="a" style="left:798.5px;top:406px;width:1.5px;height:22px;background:linear-gradient(#b8b8b8,#d4d4d4 70%,#e6e6e6)"></div>
</body>
</html>
